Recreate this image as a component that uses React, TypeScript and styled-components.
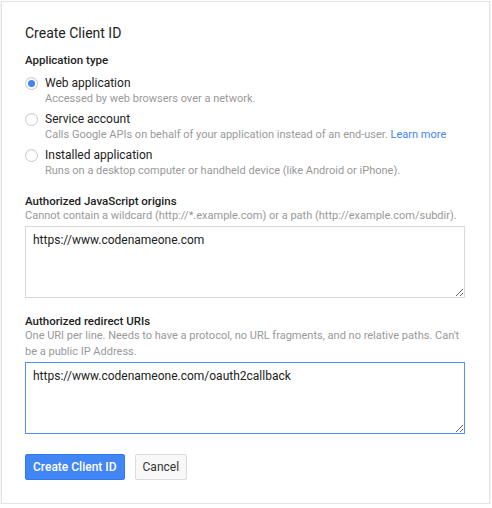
import React from "react";
import styled, { createGlobalStyle } from "styled-components";

const Global = createGlobalStyle`
  html, body { margin: 0; padding: 0; background: #fff; }
  body { font-family: Roboto, "Liberation Sans", Arial, sans-serif; color: #222; }
  * { box-sizing: border-box; }
`;

const Card = styled.div`
  margin: 1px 0 0 1px;
  width: 489px;
  height: 503px;
  border: 1px solid #e3e3e3;
  box-shadow: 0 1px 2px rgba(0, 0, 0, 0.12);
  padding: 22px 23px 0 23px;
  background: #fff;
`;

const Title = styled.h1`
  margin: 0;
  font-size: 14px;
  font-weight: 400;
  color: #222;
  line-height: 18px;
`;

const SectionLabel = styled.div<{ $mt: number }>`
  font-size: 11.5px;
  font-weight: 500;
  color: #222;
  line-height: 14px;
  margin-top: ${(p) => p.$mt}px;
`;

const Hint = styled.div`
  font-size: 11px;
  color: #999;
  line-height: 16px;
`;

const RadioList = styled.div`
  display: flex;
  flex-direction: column;
  gap: 4px;
  margin-top: 8px;
`;

const RadioRow = styled.label`
  display: flex;
  align-items: flex-start;
  gap: 7px;
`;

const RadioCircle = styled.span<{ $on?: boolean }>`
  flex: none;
  width: 13px;
  height: 13px;
  border-radius: 50%;
  border: 1px solid #c9c9c9;
  background: #fff;
  margin-top: 2px;
  display: flex;
  align-items: center;
  justify-content: center;
  box-shadow: inset 0 1px 1px rgba(0, 0, 0, 0.05);
  &::after {
    content: "";
    display: ${(p) => (p.$on ? "block" : "none")};
    width: 7px;
    height: 7px;
    border-radius: 50%;
    background: #4285f4;
  }
`;

const RadioText = styled.div`
  display: flex;
  flex-direction: column;
`;

const RadioLabel = styled.div`
  font-size: 12px;
  color: #222;
  line-height: 16px;
`;

const Link = styled.a`
  color: #4285f4;
  text-decoration: none;
`;

const Area = styled.textarea<{ $focus?: boolean }>`
  display: block;
  width: 440px;
  height: 72px;
  margin-top: 2px;
  padding: 5px 7px;
  border: 1px solid ${(p) => (p.$focus ? "#4d90fe" : "#d9d9d9")};
  outline: none;
  font-family: Roboto, "Liberation Sans", Arial, sans-serif;
  font-size: 12px;
  color: #222;
  line-height: 16px;
  resize: both;
  border-radius: 0;
`;

const Actions = styled.div`
  display: flex;
  gap: 10px;
  margin-top: 20px;
`;

const Button = styled.button<{ $primary?: boolean }>`
  height: 26px;
  padding: 0 7px;
  font-family: Roboto, "Liberation Sans", Arial, sans-serif;
  font-size: 12px;
  font-weight: ${(p) => (p.$primary ? 500 : 400)};
  border-radius: 2px;
  border: 1px solid ${(p) => (p.$primary ? "#3079ed" : "#dcdcdc")};
  background: ${(p) => (p.$primary ? "#4285f4" : "#f8f8f8")};
  color: ${(p) => (p.$primary ? "#fff" : "#333")};
`;

export default function App() {
  return (
    <>
      <Global />
      <Card>
        <Title>Create Client ID</Title>
        <SectionLabel $mt={11}>Application type</SectionLabel>
        <RadioList>
          <RadioRow>
            <RadioCircle $on />
            <RadioText>
              <RadioLabel>Web application</RadioLabel>
              <Hint>Accessed by web browsers over a network.</Hint>
            </RadioText>
          </RadioRow>
          <RadioRow>
            <RadioCircle />
            <RadioText>
              <RadioLabel>Service account</RadioLabel>
              <Hint>
                Calls Google APIs on behalf of your application instead of an end-user.{" "}
                <Link href="#">Learn more</Link>
              </Hint>
            </RadioText>
          </RadioRow>
          <RadioRow>
            <RadioCircle />
            <RadioText>
              <RadioLabel>Installed application</RadioLabel>
              <Hint>Runs on a desktop computer or handheld device (like Android or iPhone).</Hint>
            </RadioText>
          </RadioRow>
        </RadioList>
        <SectionLabel $mt={15}>Authorized JavaScript origins</SectionLabel>
        <Hint>Cannot contain a wildcard (http://*.example.com) or a path (http://example.com/subdir).</Hint>
        <Area defaultValue="https://www.codenameone.com" />
        <SectionLabel $mt={16}>Authorized redirect URIs</SectionLabel>
        <Hint>
          One URI per line. Needs to have a protocol, no URL fragments, and no relative paths. Can't be a public IP Address.
        </Hint>
        <Area $focus defaultValue="https://www.codenameone.com/oauth2callback" />
        <Actions>
          <Button $primary>Create Client ID</Button>
          <Button>Cancel</Button>
        </Actions>
      </Card>
    </>
  );
}
